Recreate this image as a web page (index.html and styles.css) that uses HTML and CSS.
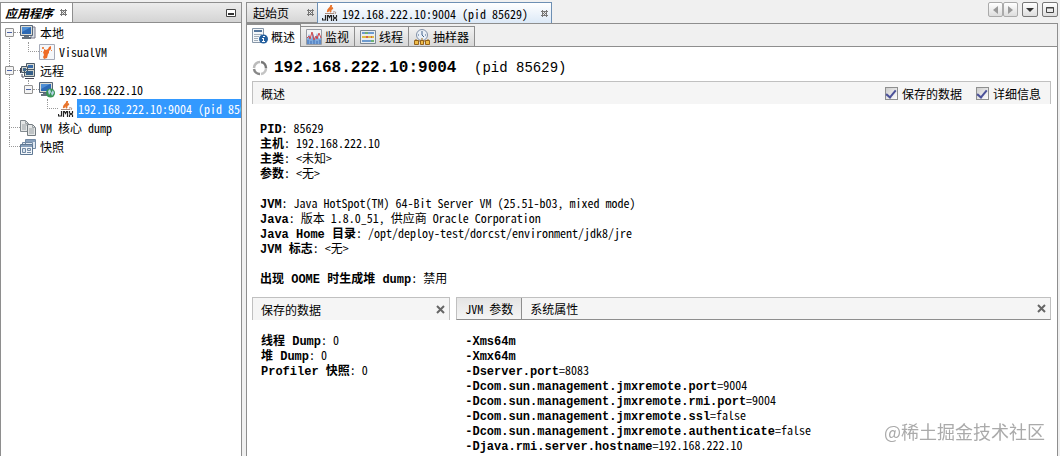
FILE: index.html
```html
<!DOCTYPE html>
<html lang="zh-CN">
    <head>
        <meta charset="utf-8">
        <title>VisualVM</title>
        <link rel="stylesheet" href="styles.css">
    </head>
    <body>

        <!-- shared icons -->
        <svg class="sprites" aria-hidden="true">
            <symbol id="close" viewBox="0 0 7 7">
                <path d="M1 0h1v1h3V0h1v1h1v1H6v3h1v1H6v1H5V6H2v1H1V6H0V5h1V2H0V1h1z" fill="#777"/>
                <path d="M2 2h1v1h1V2h1v1H4v1h1v1H4V4H3v1H2V4h1V3H2z" fill="#eee"/>
            </symbol>
            <symbol id="cross" viewBox="0 0 9 9">
                <path d="M1 1l7 7M8 1L1 8" stroke="#666" stroke-width="2"/>
            </symbol>
            <symbol id="jmx" viewBox="0 0 16 16">
                <path d="M9 0C10 3 5 4 6 7M11 3C8 4 8 6 9 7" stroke="#e8742c" stroke-width="2" fill="none"/>
                <path d="M3 8.500h9M11 7q4-1 2 2" stroke="#a88c80" fill="none"/>
                <path d="M3.500 10v5H.5v-2M5.500 16v-5.500h1l1 2 1-2h1V16M11.500 10v2l3 2v2M14.500 10v2l-3 2v2" stroke="#222" stroke-width="1.2" fill="none"/>
            </symbol>
        </svg>

        <div class="window">
            <aside class="panel">
                <div class="tabbar side-bar">
                    <button class="app-tab">应用程序 <svg class="x"><use href="#close"/></svg></button>
                    <button class="min" aria-label="最小化"><svg width="10" height="8"><path d="M.5.5h9v7h-9z" fill="#fff" stroke="#444"/><path d="M2 4h6v2H2z" fill="#333"/></svg></button>
                </div>
                <ul class="tree">
                    <li>
                        <div class="node"><button class="toggle" aria-label="折叠"></button>
                            <svg class="icon" viewBox="0 0 16 16"><path d="M11 2h4v11h-4z" fill="#dde3ea" stroke="#778"/><path d="M.5.5h12v10H.5z" fill="#dcdcd4" stroke="#566577"/><path d="M2 2h9v7H2z" fill="#2c69b4"/><path d="M2 2h9L2 7z" fill="#4f8fd5"/><path d="M4 11h5v1h2v2H2v-2h2z" fill="#63707c"/></svg>
                            <span>本地</span></div>
                        <ul>
                            <li><div class="node"><i class="line"></i>
                                <svg class="icon" viewBox="0 0 16 16"><path d="M.5.5h15v15H.5z" fill="#f5f7fa" stroke="#a5aab8"/><path d="M5 5l2 1 2-1 1-2 2-1v3l-2 2v2l-1 1-1 4-3 1-1-2 1-2-1-3 1-1z" fill="#ee6b26"/><path d="M3 3h2v2H3zM2 7h1v1H2zM12 6h1v1h-1z" fill="#ee8b50"/></svg>
                                <span>VisualVM</span></div></li>
                        </ul>
                    </li>
                    <li>
                        <div class="node"><button class="toggle" aria-label="折叠"></button>
                            <svg class="icon" viewBox="0 0 16 16"><path d="M6.500.5h8v7h-8z" fill="#d9dbd4" stroke="#4a5967"/><path d="M8 2h5v3H8z" fill="#386ba8"/><path d="M1.500 3.500h6v6h-6zM4.500 6.500h10v7h-10z" fill="#cfd1ca" stroke="#4a5967"/><path d="M3 5h3v3H3z" fill="#41698f"/><path d="M6 8h7v4H6z" fill="#365f89"/><path d="M5 15.500h9M.5 5v5M2 11v3h2" stroke="#445" fill="none"/></svg>
                            <span>远程</span></div>
                        <ul>
                            <li>
                                <div class="node"><button class="toggle" aria-label="折叠"></button>
                                    <svg class="icon" viewBox="0 0 16 16"><path d="M.5.5h13v10H.5z" fill="#dcdcd4" stroke="#566577"/><path d="M2 2h10v7H2z" fill="#2c69b4"/><path d="M2 2h9L2 7z" fill="#4f8fd5"/><path d="M4 11h5v1h1v2H2v-2h2z" fill="#63707c"/><circle cx="11.500" cy="11" r="4.500" fill="#389455"/><path d="M9 9l2-2 1 3-2 3zM14 8l1 3-2 3-1-3z" fill="#b5d4e8"/></svg>
                                    <span>192.168.222.10</span></div>
                                <ul>
                                    <li><div class="node"><i class="line"></i>
                                        <svg class="icon"><use href="#jmx"/></svg>
                                        <span class="selected">192.168.222.10:9004 (pid 85629)</span></div></li>
                                </ul>
                            </li>
                        </ul>
                    </li>
                    <li><div class="node"><i class="line"></i>
                        <svg class="icon" viewBox="0 0 16 16"><path d="M.5.5h5l3 3v8h-8z" fill="#e4e6e6" stroke="#838b90"/><path d="M5.500.5v3h3M2 5h5M2 7h4M2 9h4" stroke="#9aa1a5" fill="none"/><path d="M7.500 4.500h5l3 3v8h-8z" fill="#e4e6e6" stroke="#737b80"/><path d="M12.500 4.500v3h3M9 9h5M9 11h5M9 13h5" stroke="#9aa1a5" fill="none"/></svg>
                        <span>VM 核心 dump</span></div></li>
                    <li><div class="node"><i class="line"></i>
                        <svg class="icon" viewBox="0 0 16 16"><path d="M5.500.5h10v9h-10zM2.500 3.500h10v9h-10z" fill="#dfe8f2" stroke="#7189a4"/><path d="M.5 5.500h12v10H.5z" fill="#f2f6fa" stroke="#5f7893"/><path d="M6 2h9M1 7h11" stroke="#87a0bc" stroke-width="2"/><path d="M2.500 9.500h3v4h-3zM7.500 9.500h3v2h-3zM7 13.500h4" fill="#dce6ef" stroke="#7189a4"/></svg>
                        <span>快照</span></div></li>
                </ul>
            </aside>

            <main>
                <div class="tabbar">
                    <button class="doc-tab">起始页 <svg class="x"><use href="#close"/></svg></button>
                    <button class="doc-tab current"><svg class="icon"><use href="#jmx"/></svg><span>192.168.222.10:9004 (pid 85629)</span> <svg class="x"><use href="#close"/></svg></button>
                    <div class="controls">
                        <div class="pair">
                            <button aria-label="上一个"><svg width="5" height="8"><path d="M5 0v8L0 4z" fill="#999"/></svg></button>
                            <button aria-label="下一个"><svg width="5" height="8"><path d="M0 0v8l5-4z" fill="#999"/></svg></button>
                        </div>
                        <button aria-label="列表"><svg width="8" height="4"><path d="M0 0h8L4 4z" fill="#333"/></svg></button>
                        <button aria-label="最大化"><svg width="8" height="6"><path d="M.5.5h7v5h-7z" fill="none" stroke="#444"/><path d="M0 1h8" stroke="#444"/></svg></button>
                    </div>
                </div>

                <nav class="views">
                    <button class="view on"><svg class="icon" viewBox="0 0 16 16"><path d="M.5.5h11v14H.5z" fill="#f4f7fa" stroke="#8797a8"/><path d="M2 3h8" stroke="#52749b" stroke-width="2"/><path d="M2 6.500h8M2 8.500h5M2 10.500h4M2 12.500h4" stroke="#a2adb8"/><circle cx="11.500" cy="11" r="4.500" fill="#245f9e"/><path d="M11 8h2v1h-2zM10 10h2v3h1v1h-3v-1h1v-2h-1z" fill="#fff"/></svg>概述</button>
                    <button class="view"><svg class="icon" viewBox="0 0 16 16"><path d="M.5.5h15v15H.5z" fill="#f0f2f4" stroke="#989ca4"/><path d="M1 10l2-5 2 5 2-6 2 6 2-6 2 6 2-2v7H1z" fill="#7faadc"/><path d="M1 9l2-2 1 3 2-7 2 8 2-4 1 3 2-6 2 5" stroke="#d0454b" fill="none"/><path d="M2 15v-4M5 15v-3M8 15v-4M11 15v-3M14 15v-4" stroke="#3f6db5"/></svg>监视</button>
                    <button class="view"><svg class="icon" viewBox="0 0 16 16"><path d="M.5 1.500h15v13H.5z" fill="#e9edf1" stroke="#7c8793"/><path d="M2 4h12M2 12h12" stroke="#6d9bcf" stroke-width="2"/><path d="M2 8h12" stroke="#dfbd42" stroke-width="2"/><path d="M5 4h3M11 12h3" stroke="#70b270" stroke-width="2"/><path d="M6 8h2M11 8h1" stroke="#d5654b" stroke-width="2"/></svg>线程</button>
                    <button class="view"><svg class="icon" viewBox="0 0 16 16"><circle cx="8" cy="6" r="5.500" fill="#eaf0f7" stroke="#8291a8"/><path d="M8 2v4l2 2M4 6h1M11 6h1" stroke="#44658c" fill="none"/><path d="M2 10v2M14 10v2M8 9v3M2 12h12" stroke="#996b20" fill="none"/><path d="M.5 11.500h4v4h-4zM6.500 11.500h3v4h-3zM11.500 11.500h4v4h-4z" fill="#efbd4a" stroke="#94631c"/></svg>抽样器</button>
                </nav>

                <div class="content">
                    <h1><svg width="16" height="16" viewBox="0 0 16 16"><g fill="none" stroke-width="2.500"><path d="M9 2a6 6 0 0 1 5 6" stroke="#777"/><path d="M14 8a6 6 0 0 1-5 6" stroke="#c4c4c4"/><path d="M8 14a6 6 0 0 1-6-5" stroke="#888"/><path d="M2 8a6 6 0 0 1 6-6" stroke="#bbb"/></g></svg>192.168.222.10:9004 <small>(pid 85629)</small></h1>

                    <section>
                        <div class="head overview">
                            <h2>概述</h2>
                            <label><input type="checkbox" checked>保存的数据</label>
                            <label><input type="checkbox" checked>详细信息</label>
                        </div>
                        <div class="details">
                            <p><b>PID</b>: 85629</p>
                            <p><b>主机</b>: 192.168.222.10</p>
                            <p><b>主类</b>: &lt;未知&gt;</p>
                            <p><b>参数</b>: &lt;无&gt;</p>
                            <br>
                            <p><b>JVM</b>: Java HotSpot(TM) 64-Bit Server VM (25.51-b03, mixed mode)</p>
                            <p><b>Java</b>: 版本 1.8.0_51, 供应商 Oracle Corporation</p>
                            <p><b>Java Home 目录</b>: /opt/deploy-test/dorcst/environment/jdk8/jre</p>
                            <p><b>JVM 标志</b>: &lt;无&gt;</p>
                            <br>
                            <p><b>出现 OOME 时生成堆 dump</b>: 禁用</p>
                        </div>
                    </section>

                    <div class="bottom">
                        <section>
                            <div class="head">
                                <h2>保存的数据</h2>
                                <button class="cross" aria-label="关闭"><svg width="9" height="9"><use href="#cross"/></svg></button>
                            </div>
                            <div class="details">
                                <p><b>线程 Dump</b>: 0</p>
                                <p><b>堆 Dump</b>: 0</p>
                                <p><b>Profiler 快照</b>: 0</p>
                            </div>
                        </section>
                        <section>
                            <div class="head props">
                                <button class="prop on">JVM 参数</button>
                                <button class="prop">系统属性</button>
                                <button class="cross" aria-label="关闭"><svg width="9" height="9"><use href="#cross"/></svg></button>
                            </div>
                            <div class="details">
                                <p><b>-Xms64m</b></p>
                                <p><b>-Xmx64m</b></p>
                                <p><b>-Dserver.port</b>=8083</p>
                                <p><b>-Dcom.sun.management.jmxremote.port</b>=9004</p>
                                <p><b>-Dcom.sun.management.jmxremote.rmi.port</b>=9004</p>
                                <p><b>-Dcom.sun.management.jmxremote.ssl</b>=false</p>
                                <p><b>-Dcom.sun.management.jmxremote.authenticate</b>=false</p>
                                <p><b>-Djava.rmi.server.hostname</b>=192.168.222.10</p>
                            </div>
                        </section>
                    </div>
                </div>
            </main>
        </div>

        <div class="watermark">@稀土掘金技术社区</div>
    </body>
</html>
```

FILE: styles.css
```css
* {
    box-sizing: border-box;
}

body {
    margin: 0;
    background: #f0f0f0;
    color: #000;
    font: 12px/15px "Noto Sans CJK SC", sans-serif;
    font-feature-settings: "hwid"; /* half width latin letters */
}

button {
    margin: 0;
    padding: 0;
    border: 0;
    background: none;
    color: inherit;
    font: inherit;
    font-feature-settings: inherit;
}

h1, h2, p, ul {
    margin: 0;
    padding: 0;
}

svg {
    display: block;
    flex: none;
}

b {
    font-family: "Liberation Mono", "Noto Sans CJK SC", monospace;
}

.sprites {
    position: absolute;
    width: 0;
    height: 0;
}

.icon {
    width: 16px;
    height: 16px;
}

.x {
    width: 7px;
    height: 7px;
}

.window {
    display: grid;
    grid-template-columns: 242px 1fr;
    gap: 4px;
    min-height: 100vh;
    padding: 2px 2px 0 0;
}

.panel {
    min-width: 0;
    border: 1px solid #8e8e8e;
    border-bottom: 0;
    background: #fff;
    overflow: hidden;
}

.tabbar {
    display: flex;
    height: 21px;
}

.side-bar {
    height: 20px;
    border-bottom: 1px solid #8e8e8e;
    background: linear-gradient(#ececec, #d4d4d4);
}

.app-tab {
    display: flex;
    align-items: center;
    gap: 7px;
    padding: 0 5px 0 4px;
    border-right: 1px solid #8e8e8e;
    background: #fff;
    font-weight: bold;
    font-style: italic;
}

.min {
    margin-left: auto;
    padding: 0 5px;
}

/* tree */

.tree, .tree ul {
    list-style: none;
}

.tree ul {
    padding-left: 19px;
}

.tree li {
    position: relative;
}

.tree li::before {
    content: "";
    position: absolute;
    left: 8px;
    top: 0;
    bottom: 0;
    border-left: 1px dotted #999;
}

.tree > li:first-child::before {
    top: 10px;
}

.tree li:last-child::before {
    bottom: auto;
    height: 10px;
}

.node {
    display: flex;
    align-items: center;
    height: 19px;
    white-space: nowrap;
}

.node span {
    padding-left: 4px;
}

.node .selected {
    flex: 1;
    min-width: 0;
    margin-left: 3px;
    padding-left: 1px;
    overflow: hidden;
    background: #3399ff;
    color: #fff;
    line-height: 19px;
}

.toggle {
    position: relative;
    flex: none;
    width: 9px;
    height: 9px;
    margin: 0 6px 0 4px;
    border: 1px solid #919191;
    border-radius: 1px;
    background: linear-gradient(#4b63a7, #4b63a7) center / 5px 1px no-repeat, #f4f4f4;
}

.toggle::after {
    content: "";
    position: absolute;
    left: 8px;
    top: 3px;
    width: 6px;
    border-top: 1px dotted #999;
}

.line {
    flex: none;
    width: 11px;
    margin-left: 8px;
    border-top: 1px dotted #999;
}

/* document tabs */

main {
    display: flex;
    flex-direction: column;
    min-width: 0;
}

.doc-tab {
    display: flex;
    align-items: center;
    gap: 18px;
    padding: 0 3px 0 6px;
    border: 1px solid #8e8e8e;
    border-right: 0;
    background: linear-gradient(#f0f0f0, #d6d6d6);
}

.doc-tab.current {
    gap: 4px;
    border: 1px solid #6d8fb3;
    border-bottom: 0;
    padding-left: 4px;
    background: linear-gradient(#fff, #dce9f7);
}

.current .x {
    margin-left: 9px;
}

.controls {
    display: flex;
    gap: 4px;
    margin-left: auto;
}

.controls button {
    display: grid;
    place-items: center;
    width: 16px;
    height: 15px;
    border: 1px solid #777;
    border-radius: 2px;
    background: linear-gradient(#fff, #ddd);
}

.pair {
    display: flex;
}

.controls .pair button {
    width: 15px;
    border-color: #aaa;
}

.views {
    display: flex;
    align-items: flex-end;
    height: 24px;
    border: 1px solid #8e8e8e;
    background: #f0f0f0;
}

.view {
    display: flex;
    align-items: center;
    gap: 3px;
    height: 20px;
    padding: 0 5px;
    border: 1px solid #8e8e8e;
    border-width: 1px 1px 0 0;
    background: linear-gradient(#f2f2f2, #d8d8d8);
}

.view.on {
    height: 23px;
    margin-bottom: -1px;
    background: #fff;
}

.content {
    flex: 1;
    padding: 8px 6px 0 5px;
    border: 1px solid #8e8e8e;
    border-width: 0 1px;
    background: #fff;
}

h1 {
    display: flex;
    align-items: center;
    height: 26px;
    font: bold 16px/26px "Liberation Mono", monospace;
    white-space: pre;
}

h1 svg {
    margin-right: 6px;
}

h1 small {
    margin-left: 8px;
    font-size: 14px;
    font-weight: normal;
}

h2 {
    font-size: 12px;
    font-weight: normal;
}

.head {
    display: flex;
    align-items: center;
    height: 23px;
    padding-left: 8px;
    border: 1px solid #c0c0c0;
    border-bottom: 0;
    background: #f5f5f5;
}

.overview {
    padding-right: 9px;
    gap: 14px;
}

.overview h2 {
    flex: 1;
}

.overview label {
    display: flex;
    align-items: center;
    gap: 4px;
}

input {
    display: grid;
    place-items: center;
    appearance: none;
    width: 13px;
    height: 13px;
    margin: 0;
    border: 1px solid #8e8f8f;
    background: linear-gradient(135deg, #ccc, #fff);
}

input:checked::before {
    content: "";
    width: 4px;
    height: 8px;
    margin-bottom: 2px;
    border: solid #4b5199;
    border-width: 0 2px 2px 0;
    transform: rotate(40deg);
}

.details {
    padding: 16px 8px 12px;
}

.details p {
    height: 15px;
    white-space: nowrap;
}

.bottom {
    display: grid;
    grid-template-columns: 1fr 3fr;
    gap: 6px;
}

.bottom .details {
    padding: 12px 9px 0;
}

.cross {
    margin-left: auto;
    padding: 4px;
}

.props {
    padding-left: 0;
    border-bottom: 1px solid #8e8e8e;
}

.prop {
    height: 21px;
    padding: 0 8px;
}

.prop.on {
    border-right: 1px solid #8e8e8e;
    background: linear-gradient(#e4e4e4, #f5f5f5);
}

.watermark {
    position: fixed;
    right: 15px;
    bottom: 12px;
    color: #aaa;
    font-size: 18px;
    line-height: 26px;
    font-feature-settings: normal;
}
```
